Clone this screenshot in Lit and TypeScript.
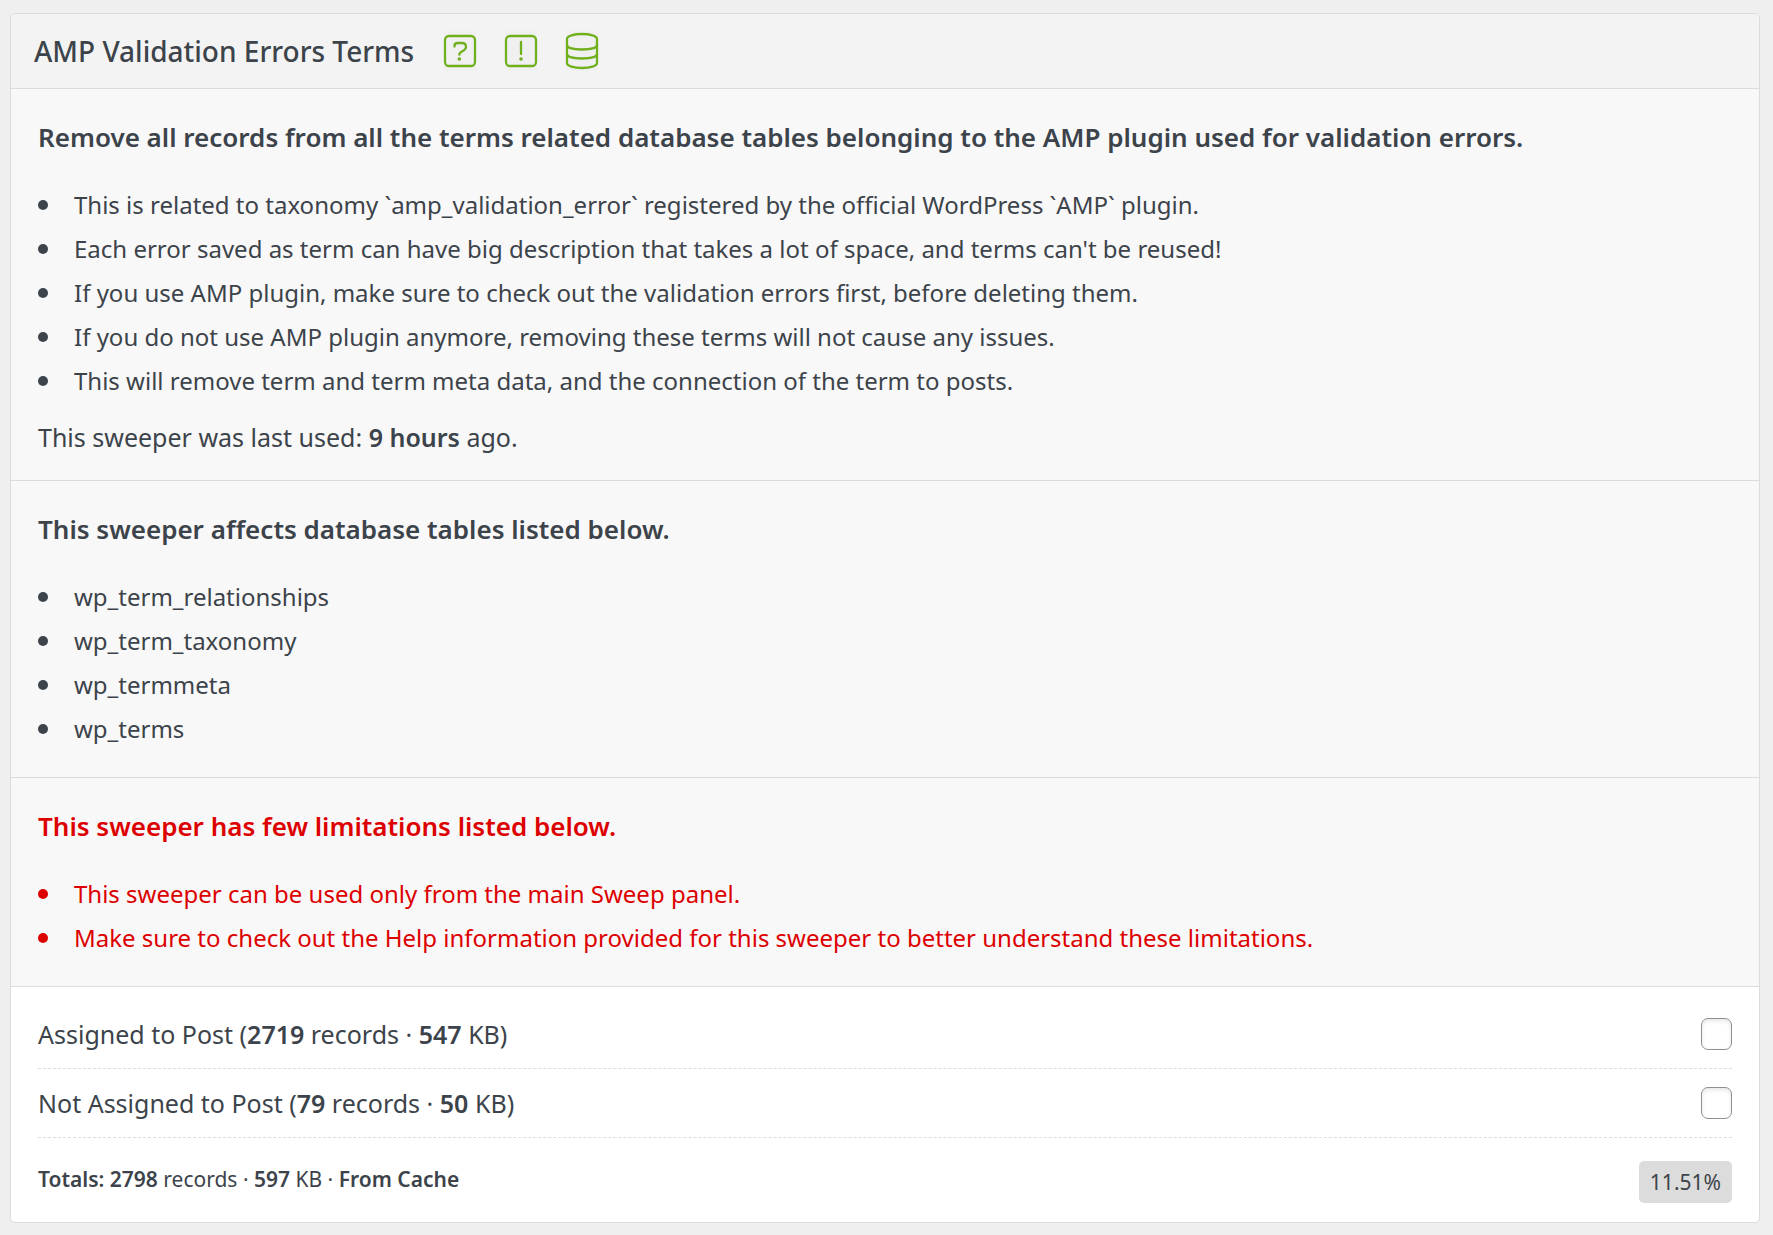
import { LitElement, html, css, svg } from "lit";
import { customElement, state } from "lit/decorators.js";
import { classMap } from "lit/directives/class-map.js";

interface Task {
  id: string;
  label: string;
  records: number;
  size: number;
}

const HELP_ICON = svg`
  <rect x="1" y="5" width="30" height="30" rx="4"></rect>
  <path d="M10.500 15.500v-.5q0-3 3-3h4.500q4 0 4 4 0 2-2 3.200l-2.500 1.500q-2 1-2.200 3"></path>
  <circle class="dot" cx="15.300" cy="28" r="1.800"></circle>`;

const INFO_ICON = svg`
  <rect x="1" y="5" width="30" height="30" rx="4"></rect>
  <path d="M16 11v12"></path>
  <circle class="dot" cx="16" cy="28" r="1.800"></circle>`;

const DATABASE_ICON = svg`
  <path d="M1 8c0-3 7-5 15-5s15 2 15 5v24c0 3-7 5-15 5S1 35 1 32z"></path>
  <path d="M1 14c0 3 7 4.500 15 4.500s15-1.500 15-4.500"></path>
  <path d="M1 23c0 3 7 4.500 15 4.500s15-1.500 15-4.500"></path>`;

@customElement("app-root")
export class AppRoot extends LitElement {
  static styles = css`
    :host {
      display: block;
      box-sizing: border-box;
      min-height: 100vh;
      padding: 13px 13px 12px 10px;
      background: #efefef;
      color: #3c434a;
      font-family: "Segoe UI", "Noto Sans", "Open Sans", sans-serif;
      font-size: 24px;
      line-height: 36px;
    }
    .card {
      border: 1px solid #dcdcde;
      border-radius: 5px;
      background: #fff;
      overflow: hidden;
    }
    .header {
      display: flex;
      align-items: center;
      gap: 30px;
      height: 74px;
      padding: 0 23px;
      background: #f3f3f3;
    }
    .title {
      margin: 0;
      font-size: 28px;
      font-weight: 500;
    }
    .tools {
      display: flex;
      gap: 29px;
    }
    .tool {
      display: block;
      width: 32px;
      height: 40px;
      padding: 0;
      border: 0;
      background: #f0f0f0;
      cursor: pointer;
    }
    .icon {
      display: block;
      width: 32px;
      height: 40px;
      overflow: visible;
      fill: none;
      stroke: #70b01d;
      stroke-width: 2.3;
      stroke-linecap: round;
    }
    .icon .dot {
      fill: #70b01d;
      stroke: none;
    }
    .section {
      padding: 30px 27px 25px;
      border-top: 1px solid #dcdcde;
      background: #f8f8f8;
    }
    .section.warning {
      color: #dd0000;
    }
    .heading {
      margin: 0 0 32px;
      font-size: 26px;
      font-weight: 600;
    }
    .list {
      display: grid;
      gap: 8px;
      margin: 0;
      padding: 0 0 5px;
      list-style: none;
    }
    .item {
      display: flex;
      align-items: center;
      gap: 26px;
    }
    .item::before {
      content: "";
      flex: none;
      width: 10px;
      height: 10px;
      border-radius: 50%;
      background: currentColor;
    }
    .used {
      margin: 15px 0 0;
      font-size: 25px;
    }
    strong {
      font-weight: 600;
    }
    .tasks {
      padding: 13px 27px 19px;
      border-top: 1px solid #dcdcde;
    }
    .task {
      display: flex;
      align-items: center;
      justify-content: space-between;
      height: 68px;
      border-bottom: 1px dashed #dcdcde;
      font-size: 25px;
    }
    .check {
      appearance: none;
      flex: none;
      width: 31px;
      height: 32px;
      margin: 0;
      border: 1px solid #8c8f94;
      border-radius: 7px;
      background: #fff;
      box-shadow: inset 0 2px 4px rgba(0, 0, 0, 0.1);
    }
    .check:checked {
      background: #70b01d;
    }
    .totals {
      display: flex;
      align-items: flex-start;
      justify-content: space-between;
      padding-top: 23px;
      font-size: 21px;
    }
    .badge {
      padding: 3px 11px;
      border-radius: 5px;
      background: #dcdcdc;
    }
  `;

  @state() private selected = new Set<string>();

  private tasks: Task[] = [
    { id: "assigned", label: "Assigned to Post", records: 2719, size: 547 },
    { id: "unassigned", label: "Not Assigned to Post", records: 79, size: 50 },
  ];

  private toggle(id: string) {
    const next = new Set(this.selected);
    if (!next.delete(id)) next.add(id);
    this.selected = next;
  }

  private tool(label: string, shape: unknown) {
    return html`<button class="tool" type="button" aria-label=${label}>
      <svg class="icon" viewBox="0 0 32 40" aria-hidden="true">${shape}</svg>
    </button>`;
  }

  private section(heading: string, items: string[], warning = false, footer: unknown = "") {
    return html`<section class=${classMap({ section: true, warning })}>
      <h3 class="heading">${heading}</h3>
      <ul class="list">
        ${items.map((item) => html`<li class="item">${item}</li>`)}
      </ul>
      ${footer}
    </section>`;
  }

  render() {
    return html`<article class="card">
      <header class="header">
        <h2 class="title">AMP Validation Errors Terms</h2>
        <div class="tools">
          ${this.tool("Help", HELP_ICON)}
          ${this.tool("Limitations", INFO_ICON)}
          ${this.tool("Database tables", DATABASE_ICON)}
        </div>
      </header>
      ${this.section(
        "Remove all records from all the terms related database tables belonging to the AMP plugin used for validation errors.",
        [
          "This is related to taxonomy `amp_validation_error` registered by the official WordPress `AMP` plugin.",
          "Each error saved as term can have big description that takes a lot of space, and terms can't be reused!",
          "If you use AMP plugin, make sure to check out the validation errors first, before deleting them.",
          "If you do not use AMP plugin anymore, removing these terms will not cause any issues.",
          "This will remove term and term meta data, and the connection of the term to posts.",
        ],
        false,
        html`<p class="used">This sweeper was last used: <strong>9 hours</strong> ago.</p>`,
      )}
      ${this.section("This sweeper affects database tables listed below.", [
        "wp_term_relationships",
        "wp_term_taxonomy",
        "wp_termmeta",
        "wp_terms",
      ])}
      ${this.section(
        "This sweeper has few limitations listed below.",
        [
          "This sweeper can be used only from the main Sweep panel.",
          "Make sure to check out the Help information provided for this sweeper to better understand these limitations.",
        ],
        true,
      )}
      <div class="tasks">
        ${this.tasks.map(
          (task) => html`<div class="task">
            <label for=${task.id}
              >${task.label} (<strong>${task.records}</strong> records · <strong>${task.size}</strong> KB)</label
            >
            <input
              class="check"
              type="checkbox"
              id=${task.id}
              .checked=${this.selected.has(task.id)}
              @change=${() => this.toggle(task.id)}
            />
          </div>`,
        )}
        <div class="totals">
          <span
            ><strong>Totals: 2798</strong> records · <strong>597</strong> KB · <strong>From Cache</strong></span
          >
          <span class="badge">11.51%</span>
        </div>
      </div>
    </article>`;
  }
}
